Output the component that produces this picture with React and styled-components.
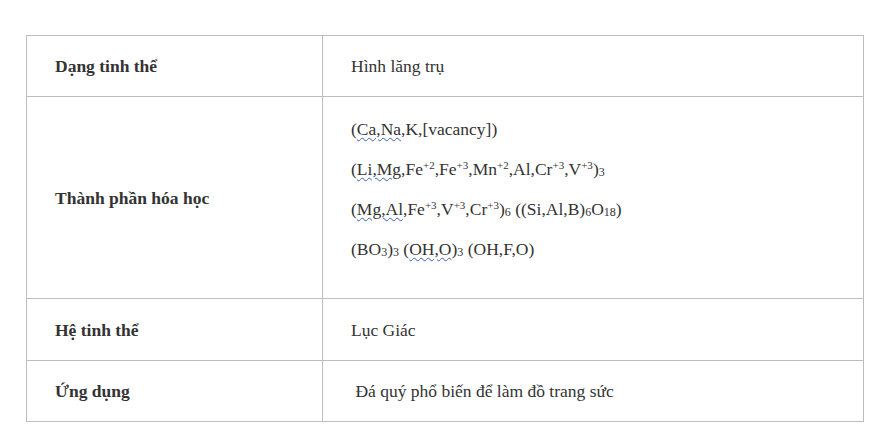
import styled, { createGlobalStyle } from 'styled-components';

const GlobalStyle = createGlobalStyle`
  body {
    margin: 0;
    background: #fff;
    font-family: "Liberation Serif", "Times New Roman", serif;
    color: #333;
  }
`;

const Page = styled.div`
  padding: 35px 0 0 26px;
`;

const Table = styled.table`
  width: 838px;
  border-collapse: collapse;
  font-size: 17.5px;
  line-height: 24px;
`;

const Row = styled.tr`
  height: ${(p) => p.$h || 'auto'};
`;

const Label = styled.td`
  width: 267px;
  border: 1px solid #bdbdbd;
  padding: 0 0 0 28px;
  font-weight: bold;
  color: #333;
  vertical-align: middle;
`;

const Value = styled.td`
  border: 1px solid #bdbdbd;
  padding: ${(p) => (p.$tall ? '20px 0 37px 28px' : '0 0 0 28px')};
  color: #333;
  vertical-align: middle;
`;

const Line = styled.p`
  margin: 0 0 16px;
  &:last-child {
    margin-bottom: 0;
  }
`;

const Spell = styled.span`
  text-decoration: underline wavy #3a62b8;
  text-decoration-thickness: 1px;
  text-underline-offset: 2px;
`;

const Sup = styled.sup`
  font-size: 11px;
  line-height: 0;
  vertical-align: 6px;
`;

const Sub = styled.sub`
  font-size: 12px;
  line-height: 0;
  vertical-align: -1px;
`;

export default function App() {
  return (
    <>
      <GlobalStyle />
      <Page>
        <Table>
          <tbody>
            <Row $h="61px">
              <Label>Dạng tinh thể</Label>
              <Value>Hình lăng trụ</Value>
            </Row>
            <Row>
              <Label>Thành phần hóa học</Label>
              <Value $tall>
                <Line>(<Spell>Ca,Na</Spell>,K,[vacancy])</Line>
                <Line>
                  (<Spell>Li,Mg</Spell>,Fe<Sup>+2</Sup>,Fe<Sup>+3</Sup>,Mn<Sup>+2</Sup>,Al,Cr<Sup>+3</Sup>,V<Sup>+3</Sup>)<Sub>3</Sub>
                </Line>
                <Line>
                  (<Spell>Mg,Al</Spell>,Fe<Sup>+3</Sup>,V<Sup>+3</Sup>,Cr<Sup>+3</Sup>)<Sub>6</Sub> ((Si,Al,B)<Sub>6</Sub>O<Sub>18</Sub>)
                </Line>
                <Line>
                  (BO<Sub>3</Sub>)<Sub>3</Sub> (<Spell>OH,O</Spell>)<Sub>3</Sub> (OH,F,O)
                </Line>
              </Value>
            </Row>
            <Row $h="62px">
              <Label>Hệ tinh thể</Label>
              <Value>Lục Giác</Value>
            </Row>
            <Row $h="61px">
              <Label>Ứng dụng</Label>
              <Value>&nbsp;Đá quý phổ biến để làm đồ trang sức</Value>
            </Row>
          </tbody>
        </Table>
      </Page>
    </>
  );
}
